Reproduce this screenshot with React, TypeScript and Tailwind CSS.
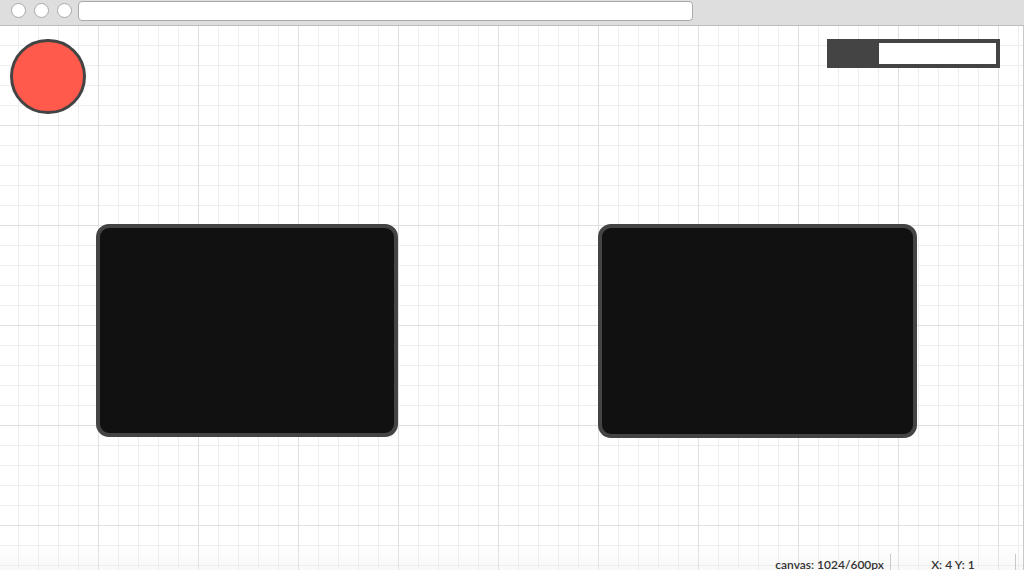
export default function App() {
  return (
    <div className="relative h-[570px] w-[1024px] overflow-hidden bg-white font-['Lato',sans-serif]">
      {/* window chrome */}
      <div className="flex h-[26px] items-start gap-[8px] border-b border-[#bdbdbd] bg-[#dedede] pl-[11px] pt-[3px]">
        <div className="flex gap-[8px]">
          <span className="h-[15px] w-[15px] rounded-full border border-[#a9a9a9] bg-white" />
          <span className="h-[15px] w-[15px] rounded-full border border-[#a9a9a9] bg-white" />
          <span className="h-[15px] w-[15px] rounded-full border border-[#a9a9a9] bg-white" />
        </div>
        <div className="ml-[-2px] mt-[-2px] h-[20px] w-[615px] rounded-[4px] border border-[#a9a9a9] bg-white" />
      </div>

      {/* canvas */}
      <div className="relative h-[544px] border-r border-[#c8c8c8] [background-image:linear-gradient(to_right,#e0e0e0_1px,transparent_1px),linear-gradient(to_bottom,#e0e0e0_1px,transparent_1px),linear-gradient(to_right,#eeeeee_1px,transparent_1px),linear-gradient(to_bottom,#eeeeee_1px,transparent_1px)] [background-size:100px_100px,100px_100px,20px_20px,20px_20px] [background-position:98px_0,0_99px,18px_0,0_19px]">
        <div className="absolute left-[10px] top-[13px] h-[75px] w-[76px] rounded-full border-[3px] border-[#444] bg-[#ff5a4b]" />

        <div className="absolute left-[827px] top-[13px] flex h-[29px] w-[173px] border-4 border-[#444] bg-white">
          <div className="h-full w-[48px] bg-[#444]" />
        </div>

        <div className="absolute left-[96px] top-[198px] h-[213px] w-[302px] rounded-[13px] border-4 border-[#444] bg-[#111]" />
        <div className="absolute left-[598px] top-[198px] h-[214px] w-[319px] rounded-[13px] border-4 border-[#444] bg-[#111]" />

        {/* status bar */}
        <div className="absolute bottom-[-30px] left-0 right-0 flex h-[56px] justify-end bg-gradient-to-b from-white/0 to-[#ececec]/80 text-[12px] font-semibold text-[#333]">
          <div className="flex h-full items-start pt-[10px]">
            <span className="pr-[6px] pt-[3px] leading-[15px]">canvas: 1024/600px</span>
            <span className="h-[40px] w-px bg-[#c8c8c8]" />
            <span className="w-[124px] pt-[3px] text-center leading-[15px]">X: 4 Y: 1</span>
            <span className="h-[40px] w-px bg-[#c8c8c8]" />
            <span className="w-[7px]" />
          </div>
        </div>
      </div>
    </div>
  );
}
